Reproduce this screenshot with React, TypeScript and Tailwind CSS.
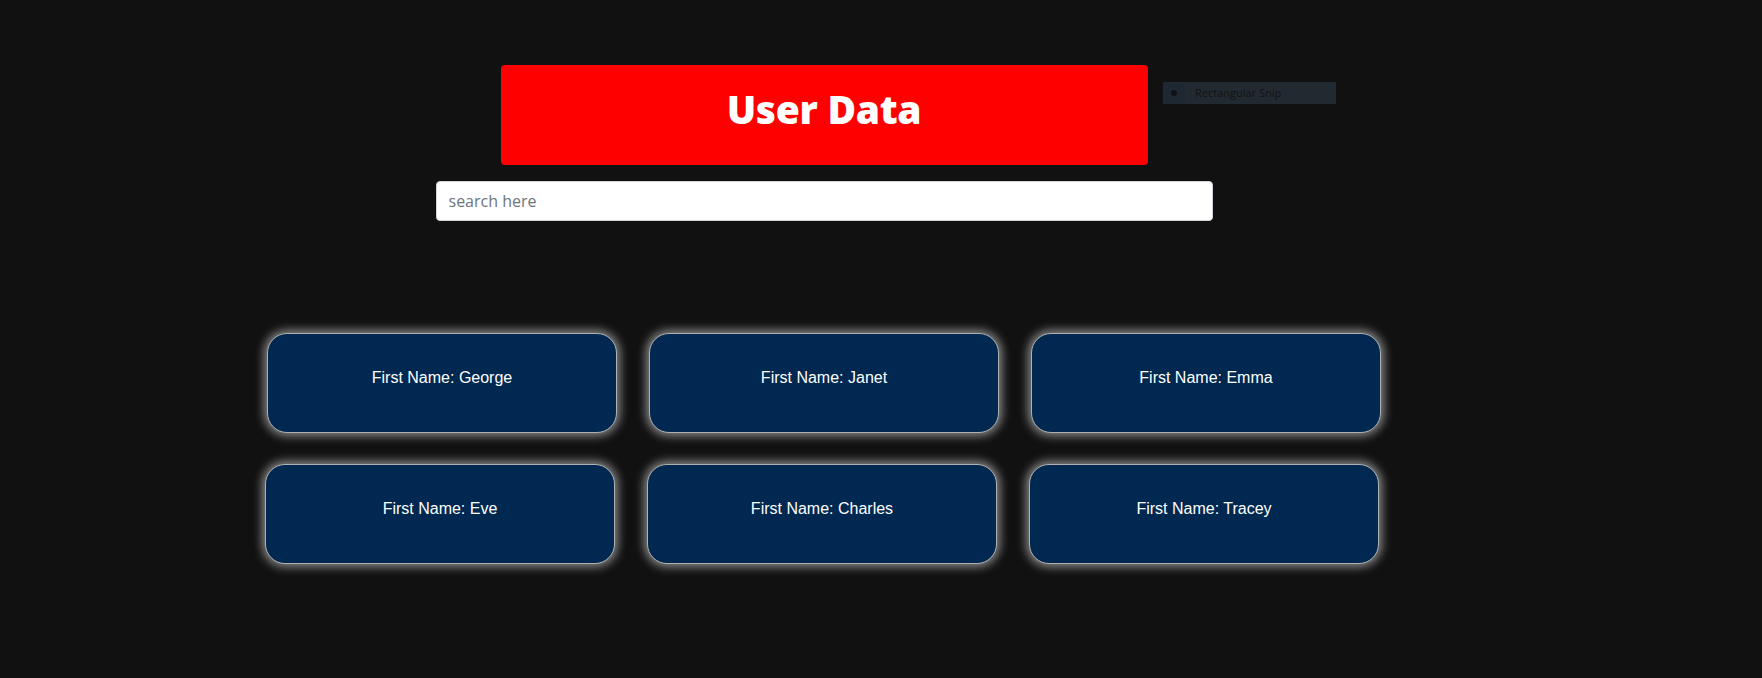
import React from "react";

const users = [
  ["George", "Janet", "Emma"],
  ["Eve", "Charles", "Tracey"],
];

function UserCard({ name }: { name: string }) {
  return (
    <div className="h-[100px] w-[350px] rounded-[20px] border border-[#b0b0b0] bg-[#002850] pt-[35px] text-center text-[16px] leading-[18px] text-white shadow-[0_0_10px_3px_rgba(255,255,255,0.5)] [font-family:'Liberation_Sans',Arial,sans-serif]">
      First Name: {name}
    </div>
  );
}

export default function App() {
  return (
    <div className="relative min-h-[678px] w-full bg-[#111111]">
      <div className="flex w-[1648px] flex-col items-center">
        <div className="mt-[65px] flex h-[100px] w-[647px] justify-center rounded-[4px] bg-[#ff0000] pt-[18px]">
          <h1 className="text-[39px] font-extrabold leading-[52px] tracking-[-0.3px] text-white [font-family:'Open_Sans',sans-serif]">
            User Data
          </h1>
        </div>
        <input
          type="text"
          placeholder="search here"
          className="mt-4 h-10 w-[777px] rounded-[4px] border border-[#ced4da] bg-white px-3 text-[16px] text-[#495057] outline-none placeholder:text-[#6c757d] [font-family:'Open_Sans',sans-serif]"
        />
        <div className="mt-[112px] flex flex-col items-center gap-[31px]">
          {users.map((row, i) => (
            <div key={i} className={i === 1 ? "flex gap-8 pr-1" : "flex gap-8"}>
              {row.map((n) => (
                <UserCard key={n} name={n} />
              ))}
            </div>
          ))}
        </div>
      </div>

      {/* leftover snipping tool tooltip */}
      <div className="absolute left-[1163px] top-[82px] flex h-[22px] w-[173px] items-center bg-[#222a31] text-[11px] text-[#121212] [font-family:'Open_Sans',sans-serif]">
        <div className="flex h-full w-[22px] items-center justify-center bg-[#1e2833]">
          <span className="h-[6px] w-[6px] rounded-full bg-[#121212]" />
        </div>
        <span className="ml-[10px]">Rectangular Snip</span>
      </div>
    </div>
  );
}
